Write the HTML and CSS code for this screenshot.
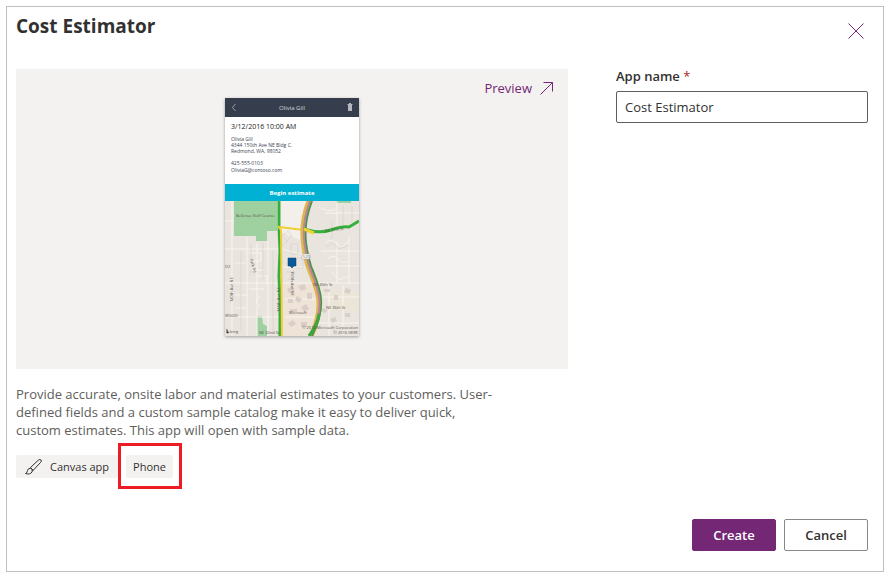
FILE: index.html
```html
<!DOCTYPE html>
<html lang="en">
<head>
<meta charset="utf-8">
<meta name="viewport" content="width=device-width, initial-scale=1">
<title>Cost Estimator</title>
<link rel="stylesheet" href="styles.css">
</head>
<body>
<main class="dialog" role="dialog" aria-labelledby="dialog-title">
  <header class="dialog-header">
    <h1 id="dialog-title" class="dialog-title">Cost Estimator</h1>
    <button class="close" type="button" aria-label="Close">
      <svg width="16" height="16" viewBox="0 0 16 16" fill="none" stroke="currentColor" stroke-width="1"><path d="M.5.5l15 15M15.5.5l-15 15"/></svg>
    </button>
  </header>

  <div class="dialog-body">
    <section class="details">
      <div class="hero">
        <svg class="phone" width="134" height="238" viewBox="0 0 134 238" role="img" aria-label="Phone app with customer details and a map">
          <rect width="134" height="238" fill="#fff"/>
          <rect width="134" height="19" fill="#363e4d"/>
          <path d="M10.5 6L7.500 9.500L10.500 13" fill="none" stroke="#b4b8be" stroke-width=".8"/>
          <text x="67" y="12" class="shot-head" text-anchor="middle">Olivia Gill</text>
          <path d="M122.500 6h5v1h-5zM124 5h2v1h-2zM123 7h4v6h-4z" fill="#b4b8be"/>
          <text x="6" y="31" class="shot-date">3/12/2016 10:00 AM</text>
          <g class="shot-info">
            <text x="6" y="43">Olivia Gill</text>
            <text x="6" y="49">4344 150th Ave NE Bldg C.</text>
            <text x="6" y="55">Redmond, WA, 98052</text>
            <text x="6" y="67">425-555-0103</text>
            <text x="6" y="74">OliviaG@contoso.com</text>
          </g>
          <rect y="86" width="134" height="17" fill="#00b1d3"/>
          <text x="67" y="97" class="shot-action" text-anchor="middle">Begin estimate</text>

          <svg y="103" width="134" height="135" viewBox="0 0 134 135">
            <rect width="134" height="135" fill="#e9e4dd"/>
            <path d="M54 0h30l-5 20-1 20-20-8-4-5z" fill="#f3f0ec"/>
            <path d="M9 0h43v30h-10v10h-11v-5h-22zM111 0h15v2h-15zM32 115h5l1 8 4 2v10h-10z" fill="#9ed19f"/>
            <path d="M58 82h36v53h-36z" fill="#efe3d8"/>
            <path d="M100 90h34v20h-34z" fill="#ebe5d8"/>
            <g fill="none" stroke="#f7f4ef" stroke-width="1">
              <path d="M7 0v135M22 36v99M32 42v93M43 40v95M0 20h9M0 48h54M0 82h134M0 116h54M57 48l22 6M57 66h26M60 98h34M60 116h34M112 0v24M100 12h34M96 50h38M100 65h34M112 40v42M124 35v47M98 96h36M104 82v53M118 84v50M88 122h46"/>
              <path d="M24 52h12v8h-10v9h13M33 75h9v8M24 88h15M35 95q-7 4 0 10M10 62h10M10 94h12M10 107h11M100 42q7-6 12 1t12-4M103 58q5-6 10 0t10 2M94 6q8 6 18 2M106 70l8 9 12-5"/>
            </g>
            <g fill="none" stroke="#dad3cb" stroke-width=".7">
              <path d="M57 35l5 5 5-5-4-5zM57 45l6-6M66 43h7v10h-7zM72 57h6v10h-7M61 71h7v7h-5M26 44v30M38 42v36M16 50v80M48 50v82M107 20v18M118 4v20M127 5v17M101 46l7-4 6 6 10-4"/>
            </g>
            <g fill="#d9cec8">
              <path d="M62 88l6-3 2 4-6 3zM73 85l7-2 1 5-5 2zM63 98h5v4h-5zM72 95l5 3-3 4-4-3zM82 92h5v6h-5zM65 108h7v3h-7zM76 106l5-3 3 5-5 3zM63 122l5-3 3 4-5 3zM76 121h6v5h-6zM99 88h6v3h-6zM109 94h4v5h-4zM121 87l5 2-2 4-5-2zM98 107l5 2-3 3-4-2zM105 118l5-2 2 4-5 2zM120 112h5v4h-5z"/>
            </g>
            <path d="M54 0v26l1 24-1 25 1 25v35" fill="none" stroke="#39ad3c" stroke-width="3"/>
            <path d="M53 25l3 4 1 106M54 26l25 3 10 3" fill="none" stroke="#efcf36" stroke-width="2"/>
            <path d="M84 0C75 23 77 42 83 65C92 88 101 103 86 135" fill="none" stroke="#e0b64f" stroke-width="5"/>
            <path d="M87 0C78 23 79 42 86 65C95 88 103 103 87 135" fill="none" stroke="#4d9448" stroke-width="2"/>
            <path d="M85 0C76 23 78 42 84 65C93 88 102 103 85 135" fill="none" stroke="#b8849b" stroke-width="2"/>
            <path d="M94 113Q93 123 84 135" fill="none" stroke="#39a83f" stroke-width="3"/>
            <path d="M79 28Q94 33 106 29T124 26L134 20" fill="none" stroke="#35b13b" stroke-width="3"/>
            <path d="M79 28l10 4" stroke="#efcf36" stroke-width="3"/>
            <rect x="77" y="53" width="8" height="5" rx="1" fill="#fff" stroke="#999" stroke-width=".5"/>
            <text x="78" y="57" class="map-label">520</text>
            <path d="M63 57h8v8h-2l-2 2-2-2h-2z" fill="#075b99" stroke="#173f68" stroke-width=".5"/>
            <g class="map-label">
              <text x="11" y="16">Bellevue Golf Course</text>
              <text x="0" y="67">D2</text>
              <text x="0" y="116">WOOD</text>
              <text transform="translate(8 101) rotate(-90)">140th Ave NE</text>
              <text transform="translate(25 58) rotate(75)">Park Rd</text>
              <text transform="translate(55 111) rotate(-90)">148th Ave NE</text>
              <text transform="translate(66 70) rotate(90)">150th Ave NE</text>
              <text x="64" y="113">Microsoft</text>
              <text x="88" y="85">NE 40th St</text>
              <text x="101" y="108">NE 36th St</text>
              <text transform="translate(100 31) rotate(-7)">NE 51st St</text>
              <text x="34" y="133">NE 32nd St</text>
              <text x="5" y="132">bing</text>
              <text x="133" y="128" text-anchor="end">© 2016 Microsoft Corporation</text>
              <text x="133" y="133" text-anchor="end">© 2016 HERE</text>
            </g>
            <path d="M1.500 128l1 .5v2l2 .5-2 1.500-1-.5z" fill="#333"/>
          </svg>
        </svg>
        <a class="preview" href="#preview">Preview
          <svg width="13" height="13" viewBox="0 0 13 13" fill="none" stroke="currentColor"><path d="M.5 12.500l12-12M3.500.5h9v9"/></svg>
        </a>
      </div>

      <p class="description">Provide accurate, onsite labor and material estimates to your customers. User-defined fields and a custom sample catalog make it easy to deliver quick, custom estimates. This app will open with sample data.</p>

      <div class="tags">
        <span class="tag tag-canvas">
          <svg width="17" height="16" viewBox="0 0 17 16" fill="none" stroke="currentColor" stroke-width="1" stroke-linejoin="round"><path d="M5.500 8.500L13.500 1Q15 0 16 1T15.500 3.500L8 11.500ZM5.500 8.500L8 11.500M5.500 9.500Q3 9 2.500 11.500Q2.500 14 .5 14.500Q5 16 7 13Q7.500 12 7 11"/></svg>
          Canvas app
        </span>
        <span class="tag tag-phone">Phone<span class="highlight"></span></span>
      </div>
    </section>

    <form class="app-form" id="app-form">
      <label class="label" for="app-name">App name <span class="required">*</span></label>
      <input class="input" id="app-name" type="text" value="Cost Estimator" required>
    </form>
  </div>

  <footer class="actions">
    <button class="button button-primary" type="submit" form="app-form">Create</button>
    <button class="button" type="button">Cancel</button>
  </footer>
</main>
</body>
</html>
```
FILE: styles.css
```css
* {
  box-sizing: border-box;
}

body {
  display: flex;
  min-height: 100vh;
  margin: 0;
  padding: 6px 9px 11px 6px;
  background: #fff;
  color: #323130;
  font: 13px/18px "Open Sans", "Noto Sans", sans-serif;
}

.dialog {
  display: flex;
  flex: 1;
  flex-direction: column;
  padding: 8px 15px 20px 9px;
  border: 1px solid #bfbfbf;
}

.dialog-header {
  display: flex;
  justify-content: space-between;
  height: 54px;
}

.dialog-title {
  margin: 0;
  font-size: 19px;
  font-weight: 700;
  line-height: 22px;
}

.close {
  display: flex;
  align-items: center;
  justify-content: center;
  width: 32px;
  height: 32px;
  margin: 0 -4px 0 0;
  padding: 0;
  border: 0;
  background: none;
  color: #742774;
}

.dialog-body {
  display: grid;
  grid-template-columns: minmax(0, 552fr) minmax(0, 252fr);
  column-gap: 48px;
}

.hero {
  position: relative;
  display: flex;
  justify-content: center;
  height: 300px;
  padding-top: 29px;
  background: #f3f2f1;
}

.phone {
  box-shadow: 0 1px 3px rgba(0, 0, 0, .35);
  font-family: "Open Sans", "Noto Sans", sans-serif;
}

.shot-head {
  fill: #d5d8dc;
  font-size: 6px;
}

.shot-date {
  fill: #222;
  font-size: 7px;
}

.shot-info {
  fill: #3a4352;
  font-size: 5px;
}

.shot-action {
  fill: #fff;
  font-size: 6px;
  font-weight: 700;
}

.map-label {
  fill: #5a5350;
  font-size: 4px;
}

.preview {
  position: absolute;
  top: 10px;
  right: 15px;
  display: flex;
  align-items: center;
  gap: 8px;
  color: #742774;
  text-decoration: none;
}

.description {
  max-width: 484px;
  margin: 16px 0;
  color: #605e5c;
}

.tags {
  display: flex;
  gap: 8px;
}

.tag {
  display: flex;
  align-items: center;
  height: 23px;
  padding: 0 7px;
  border-radius: 2px;
  background: #f3f2f1;
  font-size: 11px;
}

.tag-canvas {
  gap: 8px;
  padding: 0 9px;
}

.tag-phone {
  position: relative;
}

.highlight {
  position: absolute;
  inset: -12px -9px -11px -8px;
  border: 3px solid #ed1c24;
}

.app-form {
  display: flex;
  flex-direction: column;
}

.label {
  margin-bottom: 8px;
  font-weight: 600;
  line-height: 14px;
}

.required {
  color: #a4262c;
  font-weight: 400;
}

.input {
  width: 100%;
  height: 32px;
  padding: 0 8px;
  border: 1px solid #605e5c;
  border-radius: 2px;
  background: #fff;
  color: inherit;
  font: inherit;
}

.actions {
  display: flex;
  justify-content: flex-end;
  gap: 8px;
  margin-top: auto;
}

.button {
  min-width: 84px;
  height: 32px;
  padding: 0 16px;
  border: 1px solid #8a8886;
  border-radius: 2px;
  background: #fff;
  color: #323130;
  font: inherit;
  font-weight: 600;
}

.button-primary {
  border-color: #742774;
  background: #742774;
  color: #fff;
}
```
